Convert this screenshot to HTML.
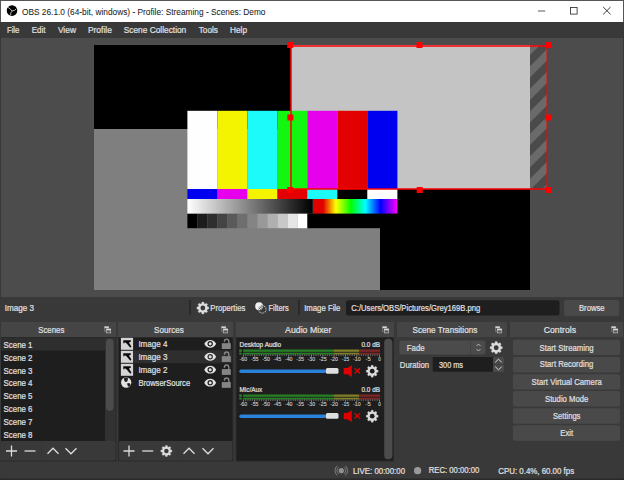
<!DOCTYPE html><html><head><meta charset="utf-8"><style>html,body{margin:0;padding:0;width:624px;height:480px;overflow:hidden;background:#3a393a}svg{display:block}text{font-family:"Liberation Sans",sans-serif}</style></head><body><svg width="624" height="480" viewBox="0 0 624 480" font-family="Liberation Sans, sans-serif"><rect x="0" y="0" width="624" height="480" fill="#3a393a" />
<rect x="0" y="0" width="624" height="22" fill="#ffffff" />
<rect x="0" y="0" width="624" height="1" fill="#555555" />
<circle cx="12" cy="10.6" r="5.3" fill="#000"/>
<g stroke="#e8e8e8" stroke-width="0.8" fill="none" stroke-linecap="round"><path d="M8.4 7.6 Q10.6 8.6 11.6 10.6"/><path d="M16 9.2 Q14.6 11.2 12.4 10.9"/><path d="M10.6 14.9 Q10.2 12.6 11.8 11.4"/></g>
<text x="22" y="14.5" font-size="9.96" fill="#1a1a1a" text-anchor="start" textLength="243.5" lengthAdjust="spacingAndGlyphs"  stroke="#1a1a1a" stroke-width="0.05">OBS 26.1.0 (64-bit, windows) - Profile: Streaming - Scenes: Demo</text>
<rect x="538" y="10.5" width="7.2" height="1" fill="#5a5a5a" />
<rect x="570.5" y="7.5" width="6.6" height="6.6" fill="none" stroke="#3a3a3a" stroke-width="0.9"/>
<path d="M603.2 7 L610.6 14.4 M610.6 7 L603.2 14.4" stroke="#222" stroke-width="0.9"/>
<rect x="1" y="22" width="622" height="16" fill="#3a393a" />
<text x="6.9" y="32.8" font-size="9.75" fill="#e1e0e1" text-anchor="start" textLength="12.5" lengthAdjust="spacingAndGlyphs"  stroke="#e1e0e1" stroke-width="0.22">File</text>
<text x="31.7" y="32.8" font-size="9.75" fill="#e1e0e1" text-anchor="start" textLength="13.7" lengthAdjust="spacingAndGlyphs"  stroke="#e1e0e1" stroke-width="0.22">Edit</text>
<text x="57.9" y="32.8" font-size="9.75" fill="#e1e0e1" text-anchor="start" textLength="18.1" lengthAdjust="spacingAndGlyphs"  stroke="#e1e0e1" stroke-width="0.22">View</text>
<text x="87.9" y="32.8" font-size="9.75" fill="#e1e0e1" text-anchor="start" textLength="24.0" lengthAdjust="spacingAndGlyphs"  stroke="#e1e0e1" stroke-width="0.22">Profile</text>
<text x="123.75" y="32.8" font-size="9.75" fill="#e1e0e1" text-anchor="start" textLength="62.5" lengthAdjust="spacingAndGlyphs"  stroke="#e1e0e1" stroke-width="0.22">Scene Collection</text>
<text x="198.75" y="32.8" font-size="9.75" fill="#e1e0e1" text-anchor="start" textLength="19.15" lengthAdjust="spacingAndGlyphs"  stroke="#e1e0e1" stroke-width="0.22">Tools</text>
<text x="230" y="32.8" font-size="9.75" fill="#e1e0e1" text-anchor="start" textLength="17" lengthAdjust="spacingAndGlyphs"  stroke="#e1e0e1" stroke-width="0.22">Help</text>
<rect x="1" y="38" width="622" height="259" fill="#4c4c4c" />
<rect x="94" y="45" width="436" height="245" fill="#000" />
<rect x="94" y="129" width="286" height="161" fill="#7f7f7f" />
<rect x="291" y="45" width="239" height="144" fill="#c4c4c4" />
<defs><clipPath id="hc"><rect x="530" y="45" width="17.3" height="144"/></clipPath></defs>
<rect x="530" y="45" width="18" height="144" fill="#6a6a6a" />
<path clip-path="url(#hc)" fill="#4a4a4a" d="M500.0 40 L511.25 40 L351.25 200 L340.0 200 Z M522.5 40 L533.75 40 L373.75 200 L362.5 200 Z M545.0 40 L556.25 40 L396.25 200 L385.0 200 Z M567.5 40 L578.75 40 L418.75 200 L407.5 200 Z M590.0 40 L601.25 40 L441.25 200 L430.0 200 Z M612.5 40 L623.75 40 L463.75 200 L452.5 200 Z M635.0 40 L646.25 40 L486.25 200 L475.0 200 Z M657.5 40 L668.75 40 L508.75 200 L497.5 200 Z M680.0 40 L691.25 40 L531.25 200 L520.0 200 Z M702.5 40 L713.75 40 L553.75 200 L542.5 200 Z M725.0 40 L736.25 40 L576.25 200 L565.0 200 Z M747.5 40 L758.75 40 L598.75 200 L587.5 200 Z M770.0 40 L781.25 40 L621.25 200 L610.0 200 Z M792.5 40 L803.75 40 L643.75 200 L632.5 200 Z"/>
<rect x="187.4" y="110.8" width="30" height="78.2" fill="#fefefe" />
<rect x="217.4" y="110.8" width="30" height="78.2" fill="#f4f400" />
<rect x="247.4" y="110.8" width="30" height="78.2" fill="#1dfafa" />
<rect x="277.4" y="110.8" width="30" height="78.2" fill="#12f612" />
<rect x="307.4" y="110.8" width="30" height="78.2" fill="#e600ec" />
<rect x="337.4" y="110.8" width="30" height="78.2" fill="#e30000" />
<rect x="367.4" y="110.8" width="30" height="78.2" fill="#0000f0" />
<rect x="187.4" y="189" width="30" height="10" fill="#0000f0" />
<rect x="217.4" y="189" width="30" height="10" fill="#e600ec" />
<rect x="247.4" y="189" width="30" height="10" fill="#f4f400" />
<rect x="277.4" y="189" width="30" height="10" fill="#e30000" />
<rect x="307.4" y="189" width="30" height="10" fill="#1dfafa" />
<rect x="337.4" y="189" width="30" height="10" fill="#000000" />
<rect x="367.4" y="189" width="30" height="10" fill="#fefefe" />
<defs><linearGradient id="gg" x1="0" x2="1"><stop offset="0" stop-color="#fff"/><stop offset="1" stop-color="#000"/></linearGradient><linearGradient id="rb" x1="0" x2="1"><stop offset="0" stop-color="#e00000"/><stop offset="0.12" stop-color="#e00000"/><stop offset="0.27" stop-color="#ffff00"/><stop offset="0.45" stop-color="#00ff00"/><stop offset="0.62" stop-color="#00ffff"/><stop offset="0.8" stop-color="#0000ff"/><stop offset="1" stop-color="#ff00ff"/></linearGradient></defs>
<rect x="187.4" y="199" width="125" height="14.75" fill="url(#gg)" />
<rect x="312.4" y="199" width="85" height="14.75" fill="#000" />
<rect x="313" y="199" width="84.4" height="14.75" fill="url(#rb)" />
<rect x="187.4" y="213.75" width="10" height="14.45" fill="#000000" />
<rect x="197.4" y="213.75" width="10" height="14.45" fill="#1c1c1c" />
<rect x="207.4" y="213.75" width="10" height="14.45" fill="#2e2e2e" />
<rect x="217.4" y="213.75" width="10" height="14.45" fill="#444444" />
<rect x="227.4" y="213.75" width="10" height="14.45" fill="#5a5a5a" />
<rect x="237.4" y="213.75" width="10" height="14.45" fill="#6e6e6e" />
<rect x="247.4" y="213.75" width="10" height="14.45" fill="#848484" />
<rect x="257.4" y="213.75" width="10" height="14.45" fill="#999999" />
<rect x="267.4" y="213.75" width="10" height="14.45" fill="#b0b0b0" />
<rect x="277.4" y="213.75" width="10" height="14.45" fill="#c8c8c8" />
<rect x="287.4" y="213.75" width="10" height="14.45" fill="#e6e6e6" />
<rect x="297.4" y="213.75" width="10" height="14.45" fill="#ffffff" />
<rect x="307.4" y="213.75" width="90" height="14.45" fill="#000" />
<path d="M291 45.9 H547.3 V188.9 H291 Z" fill="none" stroke="#ff0000" stroke-width="1.5"/>
<rect x="287.2" y="42" width="6" height="6" fill="#ff0000" />
<rect x="416.5" y="42" width="6" height="6" fill="#ff0000" />
<rect x="545" y="42" width="6" height="6" fill="#ff0000" />
<rect x="287.4" y="114.5" width="6" height="6" fill="#ff0000" />
<rect x="545" y="114.5" width="6" height="6" fill="#ff0000" />
<rect x="287.2" y="187" width="6" height="6" fill="#ff0000" />
<rect x="416.7" y="187" width="6" height="6" fill="#ff0000" />
<rect x="545" y="187" width="6" height="6" fill="#ff0000" />
<text x="4.8" y="310.8" font-size="8.9" fill="#e1e0e1" text-anchor="start" textLength="29.3" lengthAdjust="spacingAndGlyphs"  stroke="#e1e0e1" stroke-width="0.22">Image 3</text>
<rect x="189" y="300" width="2" height="15" fill="#2a2a2a" />
<polygon points="201.72,303.46 201.91,302.07 203.79,302.07 203.98,303.46 205.26,303.99 206.38,303.15 207.70,304.47 206.86,305.59 207.39,306.87 208.78,307.06 208.78,308.94 207.39,309.13 206.86,310.41 207.70,311.53 206.38,312.85 205.26,312.01 203.98,312.54 203.79,313.93 201.91,313.93 201.72,312.54 200.44,312.01 199.32,312.85 198.00,311.53 198.84,310.41 198.31,309.13 196.92,308.94 196.92,307.06 198.31,306.87 198.84,305.59 198.00,304.47 199.32,303.15 200.44,303.99" fill="#dcdcdc" stroke="#dcdcdc" stroke-width="0.3" stroke-linejoin="round"/>
<circle cx="202.85" cy="308" r="2.40" fill="#3a393a"/>
<text x="210.3" y="310.9" font-size="8.9" fill="#e1e0e1" text-anchor="start" textLength="35" lengthAdjust="spacingAndGlyphs"  stroke="#e1e0e1" stroke-width="0.22">Properties</text>
<circle cx="259.1" cy="306.2" r="3.9" fill="#f0f0f0"/>
<circle cx="262.4" cy="309.4" r="3.7" fill="none" stroke="#d0d0d0" stroke-width="1.1" stroke-dasharray="1 0.9"/>
<path d="M258.5 307.5 l3.6 3.6 M259.8 306.2 l3.6 3.6 M261.1 304.9 l2.6 2.6 M258.3 309.8 l3.6 -3.6 M259.6 311 l3.6 -3.6" stroke="#3a393a" stroke-width="0.6"/>
<text x="268.5" y="310.9" font-size="8.9" fill="#e1e0e1" text-anchor="start" textLength="20.3" lengthAdjust="spacingAndGlyphs"  stroke="#e1e0e1" stroke-width="0.22">Filters</text>
<rect x="298" y="300" width="2" height="15" fill="#2a2a2a" />
<text x="304.2" y="310.9" font-size="8.9" fill="#e1e0e1" text-anchor="start" textLength="36.2" lengthAdjust="spacingAndGlyphs"  stroke="#e1e0e1" stroke-width="0.22">Image File</text>
<rect x="346" y="300.3" width="213.5" height="15.3" fill="#1f1e1f" rx="2" />
<text x="351.3" y="310.8" font-size="9.12" fill="#e1e0e1" text-anchor="start" textLength="129" lengthAdjust="spacingAndGlyphs"  stroke="#e1e0e1" stroke-width="0.22">C:/Users/OBS/Pictures/Grey169B.png</text>
<rect x="564.1" y="299.9" width="55.2" height="16" fill="#4a494a" rx="2.5" />
<text x="579" y="310.8" font-size="9.12" fill="#e1e0e1" text-anchor="start" textLength="25.6" lengthAdjust="spacingAndGlyphs"  stroke="#e1e0e1" stroke-width="0.22">Browse</text>
<rect x="1" y="322" width="115" height="15" fill="#464546" />
<text x="38.2" y="332.7" font-size="9.75" fill="#e1e0e1" text-anchor="start" textLength="26.2" lengthAdjust="spacingAndGlyphs"  stroke="#e1e0e1" stroke-width="0.22">Scenes</text>
<g><rect x="104.5" y="326.7" width="4.3" height="4.5" fill="none" stroke="#8a8a8a" stroke-width="0.6"/><rect x="104.5" y="326.5" width="4.3" height="1.7" fill="#d4d4d4"/><rect x="106.3" y="329.1" width="4.4" height="3.8" fill="#585858" stroke="#b8b8b8" stroke-width="0.7"/><rect x="106.1" y="328.8" width="4.8" height="1.5" fill="#dadada"/></g>
<rect x="118" y="322" width="115" height="15" fill="#464546" />
<text x="154.1" y="332.7" font-size="9.75" fill="#e1e0e1" text-anchor="start" textLength="29.7" lengthAdjust="spacingAndGlyphs"  stroke="#e1e0e1" stroke-width="0.22">Sources</text>
<g><rect x="221.5" y="326.7" width="4.3" height="4.5" fill="none" stroke="#8a8a8a" stroke-width="0.6"/><rect x="221.5" y="326.5" width="4.3" height="1.7" fill="#d4d4d4"/><rect x="223.3" y="329.1" width="4.4" height="3.8" fill="#585858" stroke="#b8b8b8" stroke-width="0.7"/><rect x="223.1" y="328.8" width="4.8" height="1.5" fill="#dadada"/></g>
<rect x="236" y="322" width="158" height="15" fill="#464546" />
<text x="285.1" y="332.7" font-size="9.75" fill="#e1e0e1" text-anchor="start" textLength="46.2" lengthAdjust="spacingAndGlyphs"  stroke="#e1e0e1" stroke-width="0.22">Audio Mixer</text>
<g><rect x="382.5" y="326.7" width="4.3" height="4.5" fill="none" stroke="#8a8a8a" stroke-width="0.6"/><rect x="382.5" y="326.5" width="4.3" height="1.7" fill="#d4d4d4"/><rect x="384.3" y="329.1" width="4.4" height="3.8" fill="#585858" stroke="#b8b8b8" stroke-width="0.7"/><rect x="384.1" y="328.8" width="4.8" height="1.5" fill="#dadada"/></g>
<rect x="397" y="322" width="110" height="15" fill="#464546" />
<text x="412.5" y="332.7" font-size="9.75" fill="#e1e0e1" text-anchor="start" textLength="64.8" lengthAdjust="spacingAndGlyphs"  stroke="#e1e0e1" stroke-width="0.22">Scene Transitions</text>
<g><rect x="495.5" y="326.7" width="4.3" height="4.5" fill="none" stroke="#8a8a8a" stroke-width="0.6"/><rect x="495.5" y="326.5" width="4.3" height="1.7" fill="#d4d4d4"/><rect x="497.3" y="329.1" width="4.4" height="3.8" fill="#585858" stroke="#b8b8b8" stroke-width="0.7"/><rect x="497.1" y="328.8" width="4.8" height="1.5" fill="#dadada"/></g>
<rect x="510" y="322" width="113" height="15" fill="#464546" />
<text x="543.8" y="332.7" font-size="9.75" fill="#e1e0e1" text-anchor="start" textLength="32.2" lengthAdjust="spacingAndGlyphs"  stroke="#e1e0e1" stroke-width="0.22">Controls</text>
<g><rect x="611.5" y="326.7" width="4.3" height="4.5" fill="none" stroke="#8a8a8a" stroke-width="0.6"/><rect x="611.5" y="326.5" width="4.3" height="1.7" fill="#d4d4d4"/><rect x="613.3" y="329.1" width="4.4" height="3.8" fill="#585858" stroke="#b8b8b8" stroke-width="0.7"/><rect x="613.1" y="328.8" width="4.8" height="1.5" fill="#dadada"/></g>
<rect x="1" y="337" width="115.5" height="124.5" fill="#2a292a" />
<rect x="1" y="338" width="104" height="103" fill="#1f1e1f" />
<rect x="1" y="338" width="104" height="12.5" fill="#2f2e2f" />
<rect x="105" y="338" width="10.5" height="103" fill="#333233" />
<rect x="106" y="338.8" width="7.5" height="72" fill="#4c4c4c" rx="3.7" />
<text x="3.6" y="347.9" font-size="9.75" fill="#e1e0e1" text-anchor="start" textLength="28.9" lengthAdjust="spacingAndGlyphs"  stroke="#e1e0e1" stroke-width="0.22">Scene 1</text>
<text x="3.6" y="360.7" font-size="9.75" fill="#e1e0e1" text-anchor="start" textLength="28.9" lengthAdjust="spacingAndGlyphs"  stroke="#e1e0e1" stroke-width="0.22">Scene 2</text>
<text x="3.6" y="373.5" font-size="9.75" fill="#e1e0e1" text-anchor="start" textLength="28.9" lengthAdjust="spacingAndGlyphs"  stroke="#e1e0e1" stroke-width="0.22">Scene 3</text>
<text x="3.6" y="386.29999999999995" font-size="9.75" fill="#e1e0e1" text-anchor="start" textLength="28.9" lengthAdjust="spacingAndGlyphs"  stroke="#e1e0e1" stroke-width="0.22">Scene 4</text>
<text x="3.6" y="399.09999999999997" font-size="9.75" fill="#e1e0e1" text-anchor="start" textLength="28.9" lengthAdjust="spacingAndGlyphs"  stroke="#e1e0e1" stroke-width="0.22">Scene 5</text>
<text x="3.6" y="411.9" font-size="9.75" fill="#e1e0e1" text-anchor="start" textLength="28.9" lengthAdjust="spacingAndGlyphs"  stroke="#e1e0e1" stroke-width="0.22">Scene 6</text>
<text x="3.6" y="424.7" font-size="9.75" fill="#e1e0e1" text-anchor="start" textLength="28.9" lengthAdjust="spacingAndGlyphs"  stroke="#e1e0e1" stroke-width="0.22">Scene 7</text>
<text x="3.6" y="437.5" font-size="9.75" fill="#e1e0e1" text-anchor="start" textLength="28.9" lengthAdjust="spacingAndGlyphs"  stroke="#e1e0e1" stroke-width="0.22">Scene 8</text>
<rect x="1" y="441" width="114.5" height="19.5" fill="#3a393a" rx="1.5" />
<path d="M6.0 451 H17.0 M11.5 445.5 V456.5" stroke="#dcdcdc" stroke-width="1.3"/>
<path d="M24.5 451 H35.5" stroke="#dcdcdc" stroke-width="1.3"/>
<rect x="41" y="444" width="1" height="14" fill="#353435" />
<path d="M47.5 453.8 L53 448.2 L58.5 453.8" stroke="#dcdcdc" stroke-width="1.3" fill="none"/>
<path d="M65.5 448.2 L71 453.8 L76.5 448.2" stroke="#dcdcdc" stroke-width="1.3" fill="none"/>
<rect x="118" y="337" width="115.3" height="124.5" fill="#2a292a" />
<rect x="119" y="338" width="113.3" height="103" fill="#1f1e1f" />
<rect x="134" y="350.3" width="98.3" height="13" fill="#2f2e2f" />
<rect x="120.9" y="337.8" width="12.2" height="12" fill="#d4d4d4" />
<path d="M123.30000000000001 340.3 H130.8 V341.8 L128.9 342.6 L131.4 346.6 L130.3 347.7 L126.7 343.40000000000003 L124.60000000000001 342.1 V343.3 H123.30000000000001 Z" fill="#0a0a0a"/>
<text x="138.4" y="346.9" font-size="9.75" fill="#e1e0e1" text-anchor="start" textLength="29" lengthAdjust="spacingAndGlyphs"  stroke="#e1e0e1" stroke-width="0.22">Image 4</text>
<rect x="120.9" y="350.8" width="12.2" height="12" fill="#d4d4d4" />
<path d="M123.30000000000001 353.3 H130.8 V354.8 L128.9 355.6 L131.4 359.6 L130.3 360.7 L126.7 356.40000000000003 L124.60000000000001 355.1 V356.3 H123.30000000000001 Z" fill="#0a0a0a"/>
<text x="138.4" y="359.79999999999995" font-size="9.75" fill="#e1e0e1" text-anchor="start" textLength="29" lengthAdjust="spacingAndGlyphs"  stroke="#e1e0e1" stroke-width="0.22">Image 3</text>
<rect x="120.9" y="363.8" width="12.2" height="12" fill="#d4d4d4" />
<path d="M123.30000000000001 366.3 H130.8 V367.8 L128.9 368.6 L131.4 372.6 L130.3 373.7 L126.7 369.40000000000003 L124.60000000000001 368.1 V369.3 H123.30000000000001 Z" fill="#0a0a0a"/>
<text x="138.4" y="372.7" font-size="9.75" fill="#e1e0e1" text-anchor="start" textLength="29" lengthAdjust="spacingAndGlyphs"  stroke="#e1e0e1" stroke-width="0.22">Image 2</text>
<circle cx="126.2" cy="382.5" r="5.15" fill="#e2e2e2"/>
<path d="M124.0 378.2 Q125.8 377.0 127.9 377.7 L127.7 380.4 L126.6 382.0 L125.0 381.8 L124.2 380.2 Z M127.0 383.6 L129.4 382.9 L130.6 384.6 L129.8 386.6 L128.0 386.6 Z" fill="#1f1e1f"/>
<text x="138.4" y="385.5" font-size="9.75" fill="#e1e0e1" text-anchor="start" textLength="51.7" lengthAdjust="spacingAndGlyphs"  stroke="#e1e0e1" stroke-width="0.22">BrowserSource</text>
<path d="M204.29999999999998 343.8 C206.39999999999998 338.6 214.0 338.6 216.1 343.8 C214.0 349.0 206.39999999999998 349.0 204.29999999999998 343.8 Z" fill="#e2e2e2"/>
<circle cx="210.2" cy="343.8" r="2.1" fill="none" stroke="#1f1e1f" stroke-width="1.2"/>
<rect x="221.8" y="343.2" width="9" height="5.8" fill="#858585" />
<path d="M224.4 341.3 A2.2 2.2 0 0 1 228.8 341.3 V343.5" fill="none" stroke="#858585" stroke-width="1.4" stroke-linecap="round"/>
<path d="M204.29999999999998 356.75 C206.39999999999998 351.55 214.0 351.55 216.1 356.75 C214.0 361.95 206.39999999999998 361.95 204.29999999999998 356.75 Z" fill="#e2e2e2"/>
<circle cx="210.2" cy="356.75" r="2.1" fill="none" stroke="#2f2e2f" stroke-width="1.2"/>
<rect x="221.8" y="356.15" width="9" height="5.8" fill="#858585" />
<path d="M224.4 354.25 A2.2 2.2 0 0 1 228.8 354.25 V356.45" fill="none" stroke="#858585" stroke-width="1.4" stroke-linecap="round"/>
<path d="M204.29999999999998 369.7 C206.39999999999998 364.5 214.0 364.5 216.1 369.7 C214.0 374.9 206.39999999999998 374.9 204.29999999999998 369.7 Z" fill="#e2e2e2"/>
<circle cx="210.2" cy="369.7" r="2.1" fill="none" stroke="#1f1e1f" stroke-width="1.2"/>
<rect x="221.8" y="369.09999999999997" width="9" height="5.8" fill="#858585" />
<path d="M224.4 367.2 A2.2 2.2 0 0 1 228.8 367.2 V369.4" fill="none" stroke="#858585" stroke-width="1.4" stroke-linecap="round"/>
<path d="M204.29999999999998 382.65 C206.39999999999998 377.45 214.0 377.45 216.1 382.65 C214.0 387.84999999999997 206.39999999999998 387.84999999999997 204.29999999999998 382.65 Z" fill="#e2e2e2"/>
<circle cx="210.2" cy="382.65" r="2.1" fill="none" stroke="#1f1e1f" stroke-width="1.2"/>
<rect x="221.8" y="382.04999999999995" width="9" height="5.8" fill="#858585" />
<path d="M224.4 380.15 A2.2 2.2 0 0 1 228.8 380.15 V382.34999999999997" fill="none" stroke="#858585" stroke-width="1.4" stroke-linecap="round"/>
<rect x="119" y="441" width="113.3" height="19.5" fill="#3a393a" rx="1.5" />
<path d="M123.5 451 H134.5 M129 445.5 V456.5" stroke="#dcdcdc" stroke-width="1.3"/>
<path d="M142.2 451 H153.2" stroke="#dcdcdc" stroke-width="1.3"/>
<polygon points="165.34,446.76 165.52,445.47 167.28,445.47 167.46,446.76 168.65,447.26 169.69,446.47 170.93,447.71 170.14,448.75 170.64,449.94 171.93,450.12 171.93,451.88 170.64,452.06 170.14,453.25 170.93,454.29 169.69,455.53 168.65,454.74 167.46,455.24 167.28,456.53 165.52,456.53 165.34,455.24 164.15,454.74 163.11,455.53 161.87,454.29 162.66,453.25 162.16,452.06 160.87,451.88 160.87,450.12 162.16,449.94 162.66,448.75 161.87,447.71 163.11,446.47 164.15,447.26" fill="#dcdcdc" stroke="#dcdcdc" stroke-width="0.3" stroke-linejoin="round"/>
<circle cx="166.4" cy="451" r="2.24" fill="#3a393a"/>
<rect x="177.5" y="444" width="1" height="14" fill="#353435" />
<path d="M183.5 453.8 L189 448.2 L194.5 453.8" stroke="#dcdcdc" stroke-width="1.3" fill="none"/>
<path d="M202.5 448.2 L208 453.8 L213.5 448.2" stroke="#dcdcdc" stroke-width="1.3" fill="none"/>
<rect x="235.7" y="337" width="158.3" height="124.5" fill="#2a292a" />
<rect x="236.7" y="338" width="156.3" height="122.5" fill="#1f1e1f" />
<rect x="384.2" y="338.7" width="8.2" height="120.6" fill="#4c4c4c" rx="4" />
<text x="239.6" y="347" font-size="7.63" fill="#e1e0e1" text-anchor="start" textLength="41.5" lengthAdjust="spacingAndGlyphs"  stroke="#e1e0e1" stroke-width="0.22">Desktop Audio</text>
<text x="380" y="347" font-size="7.63" fill="#e1e0e1" text-anchor="end" textLength="18.5" lengthAdjust="spacingAndGlyphs"  stroke="#e1e0e1" stroke-width="0.22">0.0 dB</text>
<rect x="239.3" y="349.5" width="2.4" height="2.3" fill="#2a8a2a" />
<rect x="239.3" y="352.7" width="2.4" height="1.8" fill="#2a8a2a" />
<rect x="243.2" y="349.5" width="90.8" height="2.3" fill="#267f26" />
<rect x="334" y="349.5" width="25.3" height="2.3" fill="#7f7f26" />
<rect x="359.3" y="349.5" width="20.8" height="2.3" fill="#7f2626" />
<rect x="243.2" y="352.7" width="90.8" height="1.7" fill="#267f26" />
<rect x="334" y="352.7" width="25.3" height="1.7" fill="#7f7f26" />
<rect x="359.3" y="352.7" width="20.8" height="1.7" fill="#7f2626" />
<path d="M243.40 354.5 v2.3 M245.67 354.5 v1.2 M247.94 354.5 v1.2 M250.20 354.5 v1.2 M252.47 354.5 v1.2 M254.74 354.5 v2.3 M257.01 354.5 v1.2 M259.28 354.5 v1.2 M261.54 354.5 v1.2 M263.81 354.5 v1.2 M266.08 354.5 v2.3 M268.35 354.5 v1.2 M270.62 354.5 v1.2 M272.88 354.5 v1.2 M275.15 354.5 v1.2 M277.42 354.5 v2.3 M279.69 354.5 v1.2 M281.96 354.5 v1.2 M284.22 354.5 v1.2 M286.49 354.5 v1.2 M288.76 354.5 v2.3 M291.03 354.5 v1.2 M293.30 354.5 v1.2 M295.56 354.5 v1.2 M297.83 354.5 v1.2 M300.10 354.5 v2.3 M302.37 354.5 v1.2 M304.64 354.5 v1.2 M306.90 354.5 v1.2 M309.17 354.5 v1.2 M311.44 354.5 v2.3 M313.71 354.5 v1.2 M315.98 354.5 v1.2 M318.24 354.5 v1.2 M320.51 354.5 v1.2 M322.78 354.5 v2.3 M325.05 354.5 v1.2 M327.32 354.5 v1.2 M329.58 354.5 v1.2 M331.85 354.5 v1.2 M334.12 354.5 v2.3 M336.39 354.5 v1.2 M338.66 354.5 v1.2 M340.92 354.5 v1.2 M343.19 354.5 v1.2 M345.46 354.5 v2.3 M347.73 354.5 v1.2 M350.00 354.5 v1.2 M352.26 354.5 v1.2 M354.53 354.5 v1.2 M356.80 354.5 v2.3 M359.07 354.5 v1.2 M361.34 354.5 v1.2 M363.60 354.5 v1.2 M365.87 354.5 v1.2 M368.14 354.5 v2.3 M370.41 354.5 v1.2 M372.68 354.5 v1.2 M374.94 354.5 v1.2 M377.21 354.5 v1.2 M379.48 354.5 v2.3" stroke="#d8d8d8" stroke-width="0.55"/>
<text x="239.6" y="360.7" font-size="4.98" fill="#cfcfcf" text-anchor="start" textLength="7.6" lengthAdjust="spacingAndGlyphs"  stroke="#cfcfcf" stroke-width="0.1">-60</text>
<text x="250.94" y="360.7" font-size="4.98" fill="#cfcfcf" text-anchor="start" textLength="7.6" lengthAdjust="spacingAndGlyphs"  stroke="#cfcfcf" stroke-width="0.1">-55</text>
<text x="262.28" y="360.7" font-size="4.98" fill="#cfcfcf" text-anchor="start" textLength="7.6" lengthAdjust="spacingAndGlyphs"  stroke="#cfcfcf" stroke-width="0.1">-50</text>
<text x="273.62" y="360.7" font-size="4.98" fill="#cfcfcf" text-anchor="start" textLength="7.6" lengthAdjust="spacingAndGlyphs"  stroke="#cfcfcf" stroke-width="0.1">-45</text>
<text x="284.96" y="360.7" font-size="4.98" fill="#cfcfcf" text-anchor="start" textLength="7.6" lengthAdjust="spacingAndGlyphs"  stroke="#cfcfcf" stroke-width="0.1">-40</text>
<text x="296.3" y="360.7" font-size="4.98" fill="#cfcfcf" text-anchor="start" textLength="7.6" lengthAdjust="spacingAndGlyphs"  stroke="#cfcfcf" stroke-width="0.1">-35</text>
<text x="307.64" y="360.7" font-size="4.98" fill="#cfcfcf" text-anchor="start" textLength="7.6" lengthAdjust="spacingAndGlyphs"  stroke="#cfcfcf" stroke-width="0.1">-30</text>
<text x="318.97999999999996" y="360.7" font-size="4.98" fill="#cfcfcf" text-anchor="start" textLength="7.6" lengthAdjust="spacingAndGlyphs"  stroke="#cfcfcf" stroke-width="0.1">-25</text>
<text x="330.32" y="360.7" font-size="4.98" fill="#cfcfcf" text-anchor="start" textLength="7.6" lengthAdjust="spacingAndGlyphs"  stroke="#cfcfcf" stroke-width="0.1">-20</text>
<text x="341.65999999999997" y="360.7" font-size="4.98" fill="#cfcfcf" text-anchor="start" textLength="7.6" lengthAdjust="spacingAndGlyphs"  stroke="#cfcfcf" stroke-width="0.1">-15</text>
<text x="353.0" y="360.7" font-size="4.98" fill="#cfcfcf" text-anchor="start" textLength="7.6" lengthAdjust="spacingAndGlyphs"  stroke="#cfcfcf" stroke-width="0.1">-10</text>
<text x="365.53999999999996" y="360.7" font-size="4.98" fill="#cfcfcf" text-anchor="start" textLength="5.2" lengthAdjust="spacingAndGlyphs"  stroke="#cfcfcf" stroke-width="0.1">-5</text>
<text x="378.18" y="360.7" font-size="4.98" fill="#cfcfcf" text-anchor="start" textLength="2.6" lengthAdjust="spacingAndGlyphs"  stroke="#cfcfcf" stroke-width="0.1">0</text>
<rect x="239.3" y="369.6" width="87" height="3.4" fill="#2a82da" rx="1.7" />
<rect x="325.9" y="368.0" width="12.6" height="5.8" fill="#dedede" rx="1.5" />
<path d="M343.7 367.90000000000003 h3.7 l4.4 -2.7 v11.8 l-4.4 -2.7 h-3.7 Z" fill="#e00000"/>
<path d="M354.6 368.20000000000005 l5.3 5.3 M359.9 368.20000000000005 l-5.3 5.3" stroke="#e00000" stroke-width="1.3"/>
<polygon points="371.07,366.66 371.26,365.27 373.14,365.27 373.33,366.66 374.61,367.19 375.73,366.35 377.05,367.67 376.21,368.79 376.74,370.07 378.13,370.26 378.13,372.14 376.74,372.33 376.21,373.61 377.05,374.73 375.73,376.05 374.61,375.21 373.33,375.74 373.14,377.13 371.26,377.13 371.07,375.74 369.79,375.21 368.67,376.05 367.35,374.73 368.19,373.61 367.66,372.33 366.27,372.14 366.27,370.26 367.66,370.07 368.19,368.79 367.35,367.67 368.67,366.35 369.79,367.19" fill="#dcdcdc" stroke="#dcdcdc" stroke-width="0.3" stroke-linejoin="round"/>
<circle cx="372.2" cy="371.20000000000005" r="2.40" fill="#1f1e1f"/>
<text x="239.6" y="392" font-size="7.63" fill="#e1e0e1" text-anchor="start" textLength="22.5" lengthAdjust="spacingAndGlyphs"  stroke="#e1e0e1" stroke-width="0.22">Mic/Aux</text>
<text x="380" y="392" font-size="7.63" fill="#e1e0e1" text-anchor="end" textLength="18.5" lengthAdjust="spacingAndGlyphs"  stroke="#e1e0e1" stroke-width="0.22">0.0 dB</text>
<rect x="239.3" y="394.5" width="2.4" height="2.3" fill="#2a8a2a" />
<rect x="239.3" y="397.7" width="2.4" height="1.8" fill="#2a8a2a" />
<rect x="243.2" y="394.5" width="90.8" height="2.3" fill="#267f26" />
<rect x="334" y="394.5" width="25.3" height="2.3" fill="#7f7f26" />
<rect x="359.3" y="394.5" width="20.8" height="2.3" fill="#7f2626" />
<rect x="243.2" y="397.7" width="90.8" height="1.7" fill="#267f26" />
<rect x="334" y="397.7" width="25.3" height="1.7" fill="#7f7f26" />
<rect x="359.3" y="397.7" width="20.8" height="1.7" fill="#7f2626" />
<path d="M243.40 399.5 v2.3 M245.67 399.5 v1.2 M247.94 399.5 v1.2 M250.20 399.5 v1.2 M252.47 399.5 v1.2 M254.74 399.5 v2.3 M257.01 399.5 v1.2 M259.28 399.5 v1.2 M261.54 399.5 v1.2 M263.81 399.5 v1.2 M266.08 399.5 v2.3 M268.35 399.5 v1.2 M270.62 399.5 v1.2 M272.88 399.5 v1.2 M275.15 399.5 v1.2 M277.42 399.5 v2.3 M279.69 399.5 v1.2 M281.96 399.5 v1.2 M284.22 399.5 v1.2 M286.49 399.5 v1.2 M288.76 399.5 v2.3 M291.03 399.5 v1.2 M293.30 399.5 v1.2 M295.56 399.5 v1.2 M297.83 399.5 v1.2 M300.10 399.5 v2.3 M302.37 399.5 v1.2 M304.64 399.5 v1.2 M306.90 399.5 v1.2 M309.17 399.5 v1.2 M311.44 399.5 v2.3 M313.71 399.5 v1.2 M315.98 399.5 v1.2 M318.24 399.5 v1.2 M320.51 399.5 v1.2 M322.78 399.5 v2.3 M325.05 399.5 v1.2 M327.32 399.5 v1.2 M329.58 399.5 v1.2 M331.85 399.5 v1.2 M334.12 399.5 v2.3 M336.39 399.5 v1.2 M338.66 399.5 v1.2 M340.92 399.5 v1.2 M343.19 399.5 v1.2 M345.46 399.5 v2.3 M347.73 399.5 v1.2 M350.00 399.5 v1.2 M352.26 399.5 v1.2 M354.53 399.5 v1.2 M356.80 399.5 v2.3 M359.07 399.5 v1.2 M361.34 399.5 v1.2 M363.60 399.5 v1.2 M365.87 399.5 v1.2 M368.14 399.5 v2.3 M370.41 399.5 v1.2 M372.68 399.5 v1.2 M374.94 399.5 v1.2 M377.21 399.5 v1.2 M379.48 399.5 v2.3" stroke="#d8d8d8" stroke-width="0.55"/>
<text x="239.6" y="405.7" font-size="4.98" fill="#cfcfcf" text-anchor="start" textLength="7.6" lengthAdjust="spacingAndGlyphs"  stroke="#cfcfcf" stroke-width="0.1">-60</text>
<text x="250.94" y="405.7" font-size="4.98" fill="#cfcfcf" text-anchor="start" textLength="7.6" lengthAdjust="spacingAndGlyphs"  stroke="#cfcfcf" stroke-width="0.1">-55</text>
<text x="262.28" y="405.7" font-size="4.98" fill="#cfcfcf" text-anchor="start" textLength="7.6" lengthAdjust="spacingAndGlyphs"  stroke="#cfcfcf" stroke-width="0.1">-50</text>
<text x="273.62" y="405.7" font-size="4.98" fill="#cfcfcf" text-anchor="start" textLength="7.6" lengthAdjust="spacingAndGlyphs"  stroke="#cfcfcf" stroke-width="0.1">-45</text>
<text x="284.96" y="405.7" font-size="4.98" fill="#cfcfcf" text-anchor="start" textLength="7.6" lengthAdjust="spacingAndGlyphs"  stroke="#cfcfcf" stroke-width="0.1">-40</text>
<text x="296.3" y="405.7" font-size="4.98" fill="#cfcfcf" text-anchor="start" textLength="7.6" lengthAdjust="spacingAndGlyphs"  stroke="#cfcfcf" stroke-width="0.1">-35</text>
<text x="307.64" y="405.7" font-size="4.98" fill="#cfcfcf" text-anchor="start" textLength="7.6" lengthAdjust="spacingAndGlyphs"  stroke="#cfcfcf" stroke-width="0.1">-30</text>
<text x="318.97999999999996" y="405.7" font-size="4.98" fill="#cfcfcf" text-anchor="start" textLength="7.6" lengthAdjust="spacingAndGlyphs"  stroke="#cfcfcf" stroke-width="0.1">-25</text>
<text x="330.32" y="405.7" font-size="4.98" fill="#cfcfcf" text-anchor="start" textLength="7.6" lengthAdjust="spacingAndGlyphs"  stroke="#cfcfcf" stroke-width="0.1">-20</text>
<text x="341.65999999999997" y="405.7" font-size="4.98" fill="#cfcfcf" text-anchor="start" textLength="7.6" lengthAdjust="spacingAndGlyphs"  stroke="#cfcfcf" stroke-width="0.1">-15</text>
<text x="353.0" y="405.7" font-size="4.98" fill="#cfcfcf" text-anchor="start" textLength="7.6" lengthAdjust="spacingAndGlyphs"  stroke="#cfcfcf" stroke-width="0.1">-10</text>
<text x="365.53999999999996" y="405.7" font-size="4.98" fill="#cfcfcf" text-anchor="start" textLength="5.2" lengthAdjust="spacingAndGlyphs"  stroke="#cfcfcf" stroke-width="0.1">-5</text>
<text x="378.18" y="405.7" font-size="4.98" fill="#cfcfcf" text-anchor="start" textLength="2.6" lengthAdjust="spacingAndGlyphs"  stroke="#cfcfcf" stroke-width="0.1">0</text>
<rect x="239.3" y="414.6" width="87" height="3.4" fill="#2a82da" rx="1.7" />
<rect x="325.9" y="413.0" width="12.6" height="5.8" fill="#dedede" rx="1.5" />
<path d="M343.7 412.90000000000003 h3.7 l4.4 -2.7 v11.8 l-4.4 -2.7 h-3.7 Z" fill="#e00000"/>
<path d="M354.6 413.20000000000005 l5.3 5.3 M359.9 413.20000000000005 l-5.3 5.3" stroke="#e00000" stroke-width="1.3"/>
<polygon points="371.07,411.66 371.26,410.27 373.14,410.27 373.33,411.66 374.61,412.19 375.73,411.35 377.05,412.67 376.21,413.79 376.74,415.07 378.13,415.26 378.13,417.14 376.74,417.33 376.21,418.61 377.05,419.73 375.73,421.05 374.61,420.21 373.33,420.74 373.14,422.13 371.26,422.13 371.07,420.74 369.79,420.21 368.67,421.05 367.35,419.73 368.19,418.61 367.66,417.33 366.27,417.14 366.27,415.26 367.66,415.07 368.19,413.79 367.35,412.67 368.67,411.35 369.79,412.19" fill="#dcdcdc" stroke="#dcdcdc" stroke-width="0.3" stroke-linejoin="round"/>
<circle cx="372.2" cy="416.20000000000005" r="2.40" fill="#1f1e1f"/>
<rect x="399.4" y="340.4" width="86" height="14.2" fill="#4c4b4c" rx="2" />
<rect x="470" y="340.4" width="0.8" height="14.2" fill="#414041" />
<text x="406.7" y="350.8" font-size="9.75" fill="#e1e0e1" text-anchor="start" textLength="18" lengthAdjust="spacingAndGlyphs"  stroke="#e1e0e1" stroke-width="0.22">Fade</text>
<path d="M476.5 346 l2 -2 l2 2 M476.5 349 l2 2 l2 -2" stroke="#cfcfcf" stroke-width="0.8" fill="none"/>
<polygon points="495.03,343.01 495.23,341.58 497.17,341.58 497.37,343.01 498.69,343.55 499.84,342.68 501.22,344.06 500.35,345.21 500.89,346.53 502.32,346.73 502.32,348.67 500.89,348.87 500.35,350.19 501.22,351.34 499.84,352.72 498.69,351.85 497.37,352.39 497.17,353.82 495.23,353.82 495.03,352.39 493.71,351.85 492.56,352.72 491.18,351.34 492.05,350.19 491.51,348.87 490.08,348.67 490.08,346.73 491.51,346.53 492.05,345.21 491.18,344.06 492.56,342.68 493.71,343.55" fill="#dcdcdc" stroke="#dcdcdc" stroke-width="0.3" stroke-linejoin="round"/>
<circle cx="496.2" cy="347.7" r="2.48" fill="#3a393a"/>
<text x="399.8" y="367.5" font-size="9.75" fill="#e1e0e1" text-anchor="start" textLength="29.2" lengthAdjust="spacingAndGlyphs"  stroke="#e1e0e1" stroke-width="0.22">Duration</text>
<rect x="432.7" y="357" width="60.3" height="14.7" fill="#1f1e1f" rx="1" />
<text x="439" y="367.5" font-size="9.75" fill="#e1e0e1" text-anchor="start" textLength="24" lengthAdjust="spacingAndGlyphs"  stroke="#e1e0e1" stroke-width="0.22">300 ms</text>
<rect x="493" y="357" width="11" height="7.3" fill="#4a494a" rx="1.5" />
<rect x="493" y="364.6" width="11" height="7.3" fill="#4a494a" rx="1.5" />
<path d="M495.2 362.4 l3.3 -3.3 l3.3 3.3 M495.2 366.6 l3.3 3.3 l3.3 -3.3" stroke="#dcdcdc" stroke-width="1" fill="none"/>
<rect x="512.9" y="339.7" width="107.2" height="15.4" fill="#4a494a" rx="2" />
<text x="539.6" y="350.6" font-size="9.75" fill="#e1e0e1" text-anchor="start" textLength="54.1" lengthAdjust="spacingAndGlyphs"  stroke="#e1e0e1" stroke-width="0.22">Start Streaming</text>
<rect x="512.9" y="357" width="107.2" height="15.4" fill="#4a494a" rx="2" />
<text x="539.8" y="367.4" font-size="9.75" fill="#e1e0e1" text-anchor="start" textLength="53.4" lengthAdjust="spacingAndGlyphs"  stroke="#e1e0e1" stroke-width="0.22">Start Recording</text>
<rect x="512.9" y="374.2" width="107.2" height="15.4" fill="#4a494a" rx="2" />
<text x="531.6" y="385" font-size="9.75" fill="#e1e0e1" text-anchor="start" textLength="70.2" lengthAdjust="spacingAndGlyphs"  stroke="#e1e0e1" stroke-width="0.22">Start Virtual Camera</text>
<rect x="512.9" y="391.1" width="107.2" height="15.4" fill="#4a494a" rx="2" />
<text x="545.1" y="401.5" font-size="9.75" fill="#e1e0e1" text-anchor="start" textLength="43.1" lengthAdjust="spacingAndGlyphs"  stroke="#e1e0e1" stroke-width="0.22">Studio Mode</text>
<rect x="512.9" y="408.3" width="107.2" height="15.4" fill="#4a494a" rx="2" />
<text x="553" y="418.9" font-size="9.75" fill="#e1e0e1" text-anchor="start" textLength="27.4" lengthAdjust="spacingAndGlyphs"  stroke="#e1e0e1" stroke-width="0.22">Settings</text>
<rect x="512.9" y="425.3" width="107.2" height="15.4" fill="#4a494a" rx="2" />
<text x="560.3" y="435.7" font-size="9.75" fill="#e1e0e1" text-anchor="start" textLength="12.8" lengthAdjust="spacingAndGlyphs"  stroke="#e1e0e1" stroke-width="0.22">Exit</text>
<g fill="none" stroke="#8a8a8a" stroke-width="0.85"><path d="M338.54 467.36 A4.3 4.3 0 0 0 338.54 473.94"/><path d="M344.06 467.36 A4.3 4.3 0 0 1 344.06 473.94"/><path d="M337.25 465.82 A6.3 6.3 0 0 0 337.25 475.48"/><path d="M345.35 465.82 A6.3 6.3 0 0 1 345.35 475.48"/></g>
<circle cx="341.3" cy="470.65" r="2.6" fill="#8f8f8f"/>
<text x="353" y="473.6" font-size="8.8" fill="#e1e0e1" text-anchor="start" textLength="52" lengthAdjust="spacingAndGlyphs"  stroke="#e1e0e1" stroke-width="0.22">LIVE: 00:00:00</text>
<circle cx="417.6" cy="470.7" r="3.6" fill="#9a9a9a"/>
<text x="428.8" y="473.4" font-size="8.8" fill="#e1e0e1" text-anchor="start" textLength="50.5" lengthAdjust="spacingAndGlyphs"  stroke="#e1e0e1" stroke-width="0.22">REC: 00:00:00</text>
<text x="498.3" y="473.6" font-size="8.8" fill="#e1e0e1" text-anchor="start" textLength="75.8" lengthAdjust="spacingAndGlyphs"  stroke="#e1e0e1" stroke-width="0.22">CPU: 0.4%, 60.00 fps</text>
<rect x="0" y="22" width="1" height="458" fill="#383838" />
<rect x="623" y="22" width="1" height="458" fill="#383838" />
<rect x="0" y="0" width="1" height="22" fill="#555555" />
<rect x="623" y="0" width="1" height="22" fill="#555555" />
<rect x="0" y="478.5" width="624" height="1.5" fill="#2a2a2a" /></svg></body></html>
